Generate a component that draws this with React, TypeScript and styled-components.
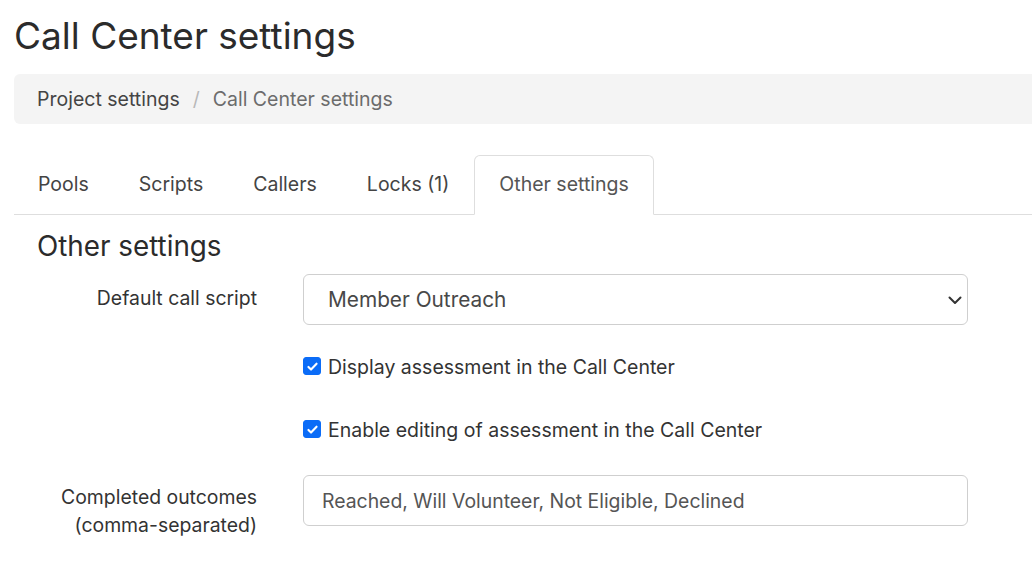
import React, { useState } from 'react';
import styled, { createGlobalStyle } from 'styled-components';

const GlobalStyle = createGlobalStyle`
  html, body {
    margin: 0;
    padding: 0;
    background: #fff;
    overflow-x: hidden;
  }
  body {
    font-family: Inter, "Noto Sans", "Liberation Sans", sans-serif;
    color: #333;
  }
  * { box-sizing: border-box; }
`;

const Page = styled.div`
  width: 1060px;
  padding: 14px 0 30px 14px;
`;

const Title = styled.h1`
  margin: 0 0 16px 0;
  font-size: 37px;
  font-weight: 400;
  line-height: 44px;
  color: #2b2b2b;
`;

const Breadcrumb = styled.nav`
  display: flex;
  align-items: center;
  height: 50px;
  padding: 0 23px;
  background: #f4f4f4;
  border-radius: 6px;
  font-size: 19.5px;
`;

const Crumb = styled.span<{ $active?: boolean }>`
  color: ${(p) => (p.$active ? '#6c6c6c' : '#444')};
`;

const Sep = styled.span`
  color: #b8b8b8;
  padding: 0 13px;
`;

const Tabs = styled.ul`
  display: flex;
  list-style: none;
  margin: 31px 0 0;
  padding: 0;
  border-bottom: 1px solid #dedede;
`;

const Tab = styled.li<{ $active?: boolean }>`
  margin-bottom: -1px;
  padding: 13px 24px 15px;
  font-size: 19.5px;
  line-height: 30px;
  border: 1px solid ${(p) => (p.$active ? '#dedede' : 'transparent')};
  border-bottom-color: ${(p) => (p.$active ? '#fff' : 'transparent')};
  border-radius: 6px 6px 0 0;
  background: ${(p) => (p.$active ? '#fff' : 'transparent')};
  color: ${(p) => (p.$active ? '#555' : '#444')};
  cursor: pointer;

  &:first-child {
    margin-left: -1px;
  }
`;

const Section = styled.section`
  padding: 15px 0 0 23px;
`;

const SectionTitle = styled.h2`
  margin: 0 0 12px;
  font-size: 27.8px;
  font-weight: 400;
  line-height: 32px;
  color: #2b2b2b;
`;

const Row = styled.div<{ $gap?: number }>`
  display: grid;
  grid-template-columns: 220px 665px;
  column-gap: 46px;
  align-items: start;
  margin-bottom: ${(p) => p.$gap ?? 0}px;
`;

const Label = styled.label<{ $top?: number }>`
  text-align: right;
  font-size: 19.4px;
  line-height: 28px;
  color: #333;
  padding-top: ${(p) => p.$top ?? 10}px;
`;

const SelectWrap = styled.div`
  position: relative;
`;

const Select = styled.select`
  appearance: none;
  width: 100%;
  height: 51px;
  padding: 0 40px 0 24px;
  font-family: inherit;
  font-size: 20.8px;
  color: #484848;
  background: #fff;
  border: 1px solid #cfcfcf;
  border-radius: 6px;
  outline: none;
`;

const Chevron = styled.svg`
  position: absolute;
  right: 5px;
  top: 18px;
  width: 16px;
  height: 16px;
  pointer-events: none;
`;

const CheckRow = styled.label`
  grid-column: 2;
  display: flex;
  align-items: center;
  gap: 7px;
  font-size: 19.5px;
  line-height: 28px;
  color: #333;
  cursor: pointer;
`;

const Box = styled.span<{ $on: boolean }>`
  display: inline-flex;
  align-items: center;
  justify-content: center;
  flex: none;
  width: 18px;
  height: 18px;
  border-radius: 3px;
  background: ${(p) => (p.$on ? '#0b6cf7' : '#fff')};
  border: 1px solid ${(p) => (p.$on ? '#0b6cf7' : '#999')};
  margin-top: -2px;
`;

const Input = styled.input`
  width: 100%;
  height: 51px;
  padding: 0 18px;
  font-family: inherit;
  font-size: 19.4px;
  color: #555;
  background: #fff;
  border: 1px solid #cfcfcf;
  border-radius: 6px;
  outline: none;
`;

const Checkbox = ({ label, checked, onToggle }: { label: string; checked: boolean; onToggle: () => void }) => (
  <CheckRow onClick={onToggle}>
    <Box $on={checked}>
      {checked && (
        <svg width="13" height="13" viewBox="0 0 16 16">
          <path d="M3 8.5l3.2 3.2L13 4.6" fill="none" stroke="#fff" strokeWidth="2.6" strokeLinecap="round" strokeLinejoin="round" />
        </svg>
      )}
    </Box>
    {label}
  </CheckRow>
);

const tabs = ['Pools', 'Scripts', 'Callers', 'Locks (1)', 'Other settings'];

export default function App() {
  const [active, setActive] = useState('Other settings');
  const [showAssessment, setShowAssessment] = useState(true);
  const [editAssessment, setEditAssessment] = useState(true);
  const [outcomes, setOutcomes] = useState('Reached, Will Volunteer, Not Eligible, Declined');

  return (
    <>
      <GlobalStyle />
      <Page>
        <Title>Call Center settings</Title>
        <Breadcrumb>
          <Crumb>Project settings</Crumb>
          <Sep>/</Sep>
          <Crumb $active>Call Center settings</Crumb>
        </Breadcrumb>

        <Tabs>
          {tabs.map((t) => (
            <Tab key={t} $active={t === active} onClick={() => setActive(t)}>
              {t}
            </Tab>
          ))}
        </Tabs>

        <Section>
          <SectionTitle>Other settings</SectionTitle>
          <Row $gap={28}>
            <Label>Default call script</Label>
            <SelectWrap>
              <Select defaultValue="member">
                <option value="member">Member Outreach</option>
                <option value="gotv">GOTV</option>
              </Select>
              <Chevron viewBox="0 0 16 16">
                <path d="M2.5 5.5L8 11l5.5-5.5" fill="none" stroke="#333" strokeWidth="2" strokeLinecap="round" strokeLinejoin="round" />
              </Chevron>
            </SelectWrap>
          </Row>
          <Row $gap={35}>
            <Checkbox label="Display assessment in the Call Center" checked={showAssessment} onToggle={() => setShowAssessment(!showAssessment)} />
          </Row>
          <Row $gap={31}>
            <Checkbox label="Enable editing of assessment in the Call Center" checked={editAssessment} onToggle={() => setEditAssessment(!editAssessment)} />
          </Row>
          <Row>
            <Label $top={8}>
              Completed outcomes
              <br />
              (comma-separated)
            </Label>
            <Input value={outcomes} onChange={(e) => setOutcomes(e.target.value)} />
          </Row>
        </Section>
      </Page>
    </>
  );
}
